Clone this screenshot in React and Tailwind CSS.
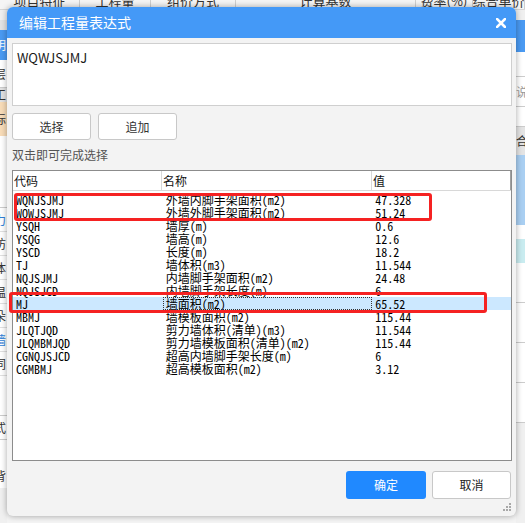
import React from "react";

const rows = [
  ["WQNJSJMJ", "外墙内脚手架面积(m2)", "47.328"],
  ["WQWJSJMJ", "外墙外脚手架面积(m2)", "51.24"],
  ["YSQH", "墙厚(m)", "0.6"],
  ["YSQG", "墙高(m)", "12.6"],
  ["YSCD", "长度(m)", "18.2"],
  ["TJ", "墙体积(m3)", "11.544"],
  ["NQJSJMJ", "内墙脚手架面积(m2)", "24.48"],
  ["NQJSJCD", "内墙脚手架长度(m)", "6"],
  ["MJ", "墙面积(m2)", "65.52"],
  ["MBMJ", "墙模板面积(m2)", "115.44"],
  ["JLQTJQD", "剪力墙体积(清单)(m3)", "11.544"],
  ["JLQMBMJQD", "剪力墙模板面积(清单)(m2)", "115.44"],
  ["CGNQJSJCD", "超高内墙脚手架长度(m)", "6"],
  ["CGMBMJ", "超高模板面积(m2)", "3.12"],
];

function LeftStrip() {
  const chars = [
    ["力", "text-[#2f7fd8]"],
    ["防", "text-[#333]"],
    ["体", "text-[#333]"],
    ["温", "text-[#333]"],
    ["朵", "text-[#333]"],
    ["墙", "text-[#2f7fd8]"],
    ["同", "text-[#333]"],
  ];
  return (
    <div className="w-[7px] flex flex-col overflow-hidden text-[12px] leading-[12px]">
      <div className="h-[10px] bg-[#f0f0f0]" />
      <div className="h-[10px] bg-[#e4e4e4]" />
      <div className="h-[30px] bg-[#4a9af2] flex items-center text-white">
        <span className="-ml-[6px]">明</span>
      </div>
      <div className="h-[28px] bg-white flex items-center border-b border-[#ccc] text-[#333]">
        <span className="-ml-[6px]">层</span>
      </div>
      <div className="h-[14px] bg-[#e2e2e2] flex items-center text-[#333]">
        <span className="-ml-[6px]">工</span>
      </div>
      <div className="h-[34px] bg-[#f8dcb8] flex items-center text-[#333]">
        <span className="-ml-[6px]">标</span>
      </div>
      <div className="h-[72px] bg-white border-b border-[#ccc]" />
      {chars.map(([c, cls], i) => (
        <div key={i} className={"h-[24px] bg-white flex items-center border-b border-[#e0e0e0] " + cls}>
          <span className="-ml-[6px]">{c}</span>
        </div>
      ))}
      <div className="h-[40px] bg-white border-b border-[#ccc]" />
      <div className="h-[24px] bg-white flex items-center text-[#333] border-b border-[#ccc]">
        <span className="-ml-[6px]">式</span>
      </div>
      <div className="h-[24px] bg-white" />
      <div className="h-[24px] bg-white flex items-center text-[#333]">
        <span className="-ml-[6px]">背</span>
      </div>
      <div className="flex-1 bg-[#f0f0f0]" />
    </div>
  );
}

function RightStrip() {
  return (
    <div className="w-[9px] flex flex-col overflow-hidden text-[12px] leading-[12px]">
      <div className="h-[10px] bg-[#f0f0f0]" />
      <div className="h-[32px] bg-[#4a9af2]" />
      <div className="h-[25px] bg-white border-b border-[#ccc]" />
      <div className="h-[30px] bg-white flex items-center text-[#999] border-b border-[#ccc]">
        <span>说</span>
      </div>
      <div className="h-[20px] bg-white border-b border-[#ccc]" />
      <div className="h-[28px] bg-[#e4e4e4] flex items-center text-[#333]">
        <span>合</span>
      </div>
      <div className="h-[70px] bg-[#a9cff2]" />
      <div className="h-[14px] bg-white" />
      <div className="h-[24px] bg-[#c9ecf0]" />
      <div className="h-[40px] bg-white border-b border-[#ccc]" />
      <div className="h-[40px] bg-white border-b border-[#ccc]" />
      <div className="h-[40px] bg-white border-b border-[#ccc]" />
      <div className="h-[40px] bg-white border-b border-[#ccc]" />
      <div className="flex-1 bg-[#f0f0f0]" />
    </div>
  );
}

function TopRow() {
  const cols = [
    ["w-[80px]", "项目特征"],
    ["w-[71px]", "工程量"],
    ["w-[85px]", "组价方式"],
    ["w-[180px]", "计算基数"],
    ["w-[57px]", "费率(%)"],
    ["flex-1", "综合单价"],
  ];
  return (
    <div className="h-[10px] flex bg-[#f5f5f5] border-b border-[#d6d6d6] overflow-hidden">
      {cols.map(([w, t], i) => (
        <div key={i} className={w + " h-full border-r border-[#cfcfcf] flex justify-center overflow-hidden"}>
          <span className="text-[13px] leading-[13px] -mt-[6px] text-[#333] whitespace-nowrap">{t}</span>
        </div>
      ))}
    </div>
  );
}

function Grip() {
  return (
    <svg width="9" height="9" viewBox="0 0 9 9" className="absolute right-[4px] bottom-[4px]">
      <g fill="#a8a8a8">
        <rect x="6" y="0" width="2" height="2" />
        <rect x="3" y="3" width="2" height="2" />
        <rect x="6" y="3" width="2" height="2" />
        <rect x="0" y="6" width="2" height="2" />
        <rect x="3" y="6" width="2" height="2" />
        <rect x="6" y="6" width="2" height="2" />
      </g>
    </svg>
  );
}

export default function App() {
  return (
    <div className="relative w-[525px] h-[523px] overflow-hidden bg-white font-['Noto_Sans_CJK_SC','Noto_Sans',sans-serif]">
      {/* page behind the dialog */}
      <div className="flex flex-col h-full">
        <TopRow />
        <div className="flex flex-1">
          <LeftStrip />
          <div className="flex-1 bg-[#f4f4f4]" />
          <RightStrip />
        </div>
      </div>

      {/* dialog */}
      <div className="absolute left-[7px] top-[7px] w-[509px] h-[509px] rounded-[6px] bg-[#f3f3f3] shadow-[0_0_6px_rgba(0,0,0,0.35)] flex flex-col">
        <div className="h-[31px] rounded-t-[6px] bg-[#4499f7] flex items-center justify-between pl-[12px] pr-[10px]">
          <span className="text-white text-[14px] tracking-[0px]">编辑工程量表达式</span>
          <svg width="10" height="10" viewBox="0 0 10 10">
            <path d="M1 1 L9 9 M9 1 L1 9" stroke="#fff" strokeWidth="2.6" strokeLinecap="square" />
          </svg>
        </div>

        <div className="flex flex-col flex-1 pl-[5px] pr-[4px] pt-[5px]">
          <div className="h-[63px] bg-white border border-[#cfcfcf] px-[4px] pt-[6px] text-[13px] leading-[16px] text-[#1a1a1a]">
            WQWJSJMJ
          </div>

          <div className="flex gap-[7px] mt-[7px]">
            <button className="w-[79px] h-[27px] bg-white border border-[#c8c8c8] rounded-[3px] text-[12px] text-[#333]">选择</button>
            <button className="w-[79px] h-[27px] bg-white border border-[#c8c8c8] rounded-[3px] text-[12px] text-[#333]">追加</button>
          </div>

          <div className="mt-[6px] h-[18px] text-[12px] leading-[18px] text-[#555]">双击即可完成选择</div>

          <div className="mt-[6px] h-[291px] bg-white border border-[#8c8c8c] flex flex-col overflow-hidden">
            <div className="flex h-[20px] border-b border-[#d8d8d8] text-[12px] leading-[20px] text-[#111]">
              <div className="w-[149px] border-r border-[#d8d8d8] pl-[1px]">代码</div>
              <div className="w-[210px] border-r border-[#d8d8d8] pl-[1px]">名称</div>
              <div className="w-[139px] border-r border-[#a0a0a0] pl-[1px]">值</div>
            </div>
            <div className="pt-[2px] font-['Noto_Sans_Mono_CJK_SC','Liberation_Mono',monospace] text-[12px] leading-[13px] text-black">
              {rows.map(([code, name, val], i) => {
                const sel = code === "MJ";
                return (
                  <div key={i} className={"flex h-[13px] " + (sel ? "bg-[#cce8ff]" : "")}>
                    <div className="w-[150px] pl-[3px] whitespace-nowrap">{code}</div>
                    <div className={"w-[210px] pl-[3px] whitespace-nowrap " + (sel ? "outline outline-1 outline-dotted outline-[#333] -outline-offset-1" : "")}>{name}</div>
                    <div className="w-[139px] pl-[3px] whitespace-nowrap">{val}</div>
                  </div>
                );
              })}
            </div>
          </div>

          <div className="flex justify-end gap-[6px] mt-[10px] pr-[1px]">
            <button className="w-[80px] h-[28px] bg-[#2089ff] rounded-[3px] text-[12px] text-white">确定</button>
            <button className="w-[79px] h-[28px] bg-white border border-[#c8c8c8] rounded-[3px] text-[12px] text-[#222]">取消</button>
          </div>
        </div>

        {/* annotation boxes */}
        <div className="absolute left-[7px] top-[186px] w-[418px] h-[28px] border-[3px] border-[#f52222] rounded-[3px]" />
        <div className="absolute left-[2px] top-[285px] w-[478px] h-[21px] border-[3px] border-[#f52222] rounded-[3px]" />

        <Grip />
      </div>
    </div>
  );
}
